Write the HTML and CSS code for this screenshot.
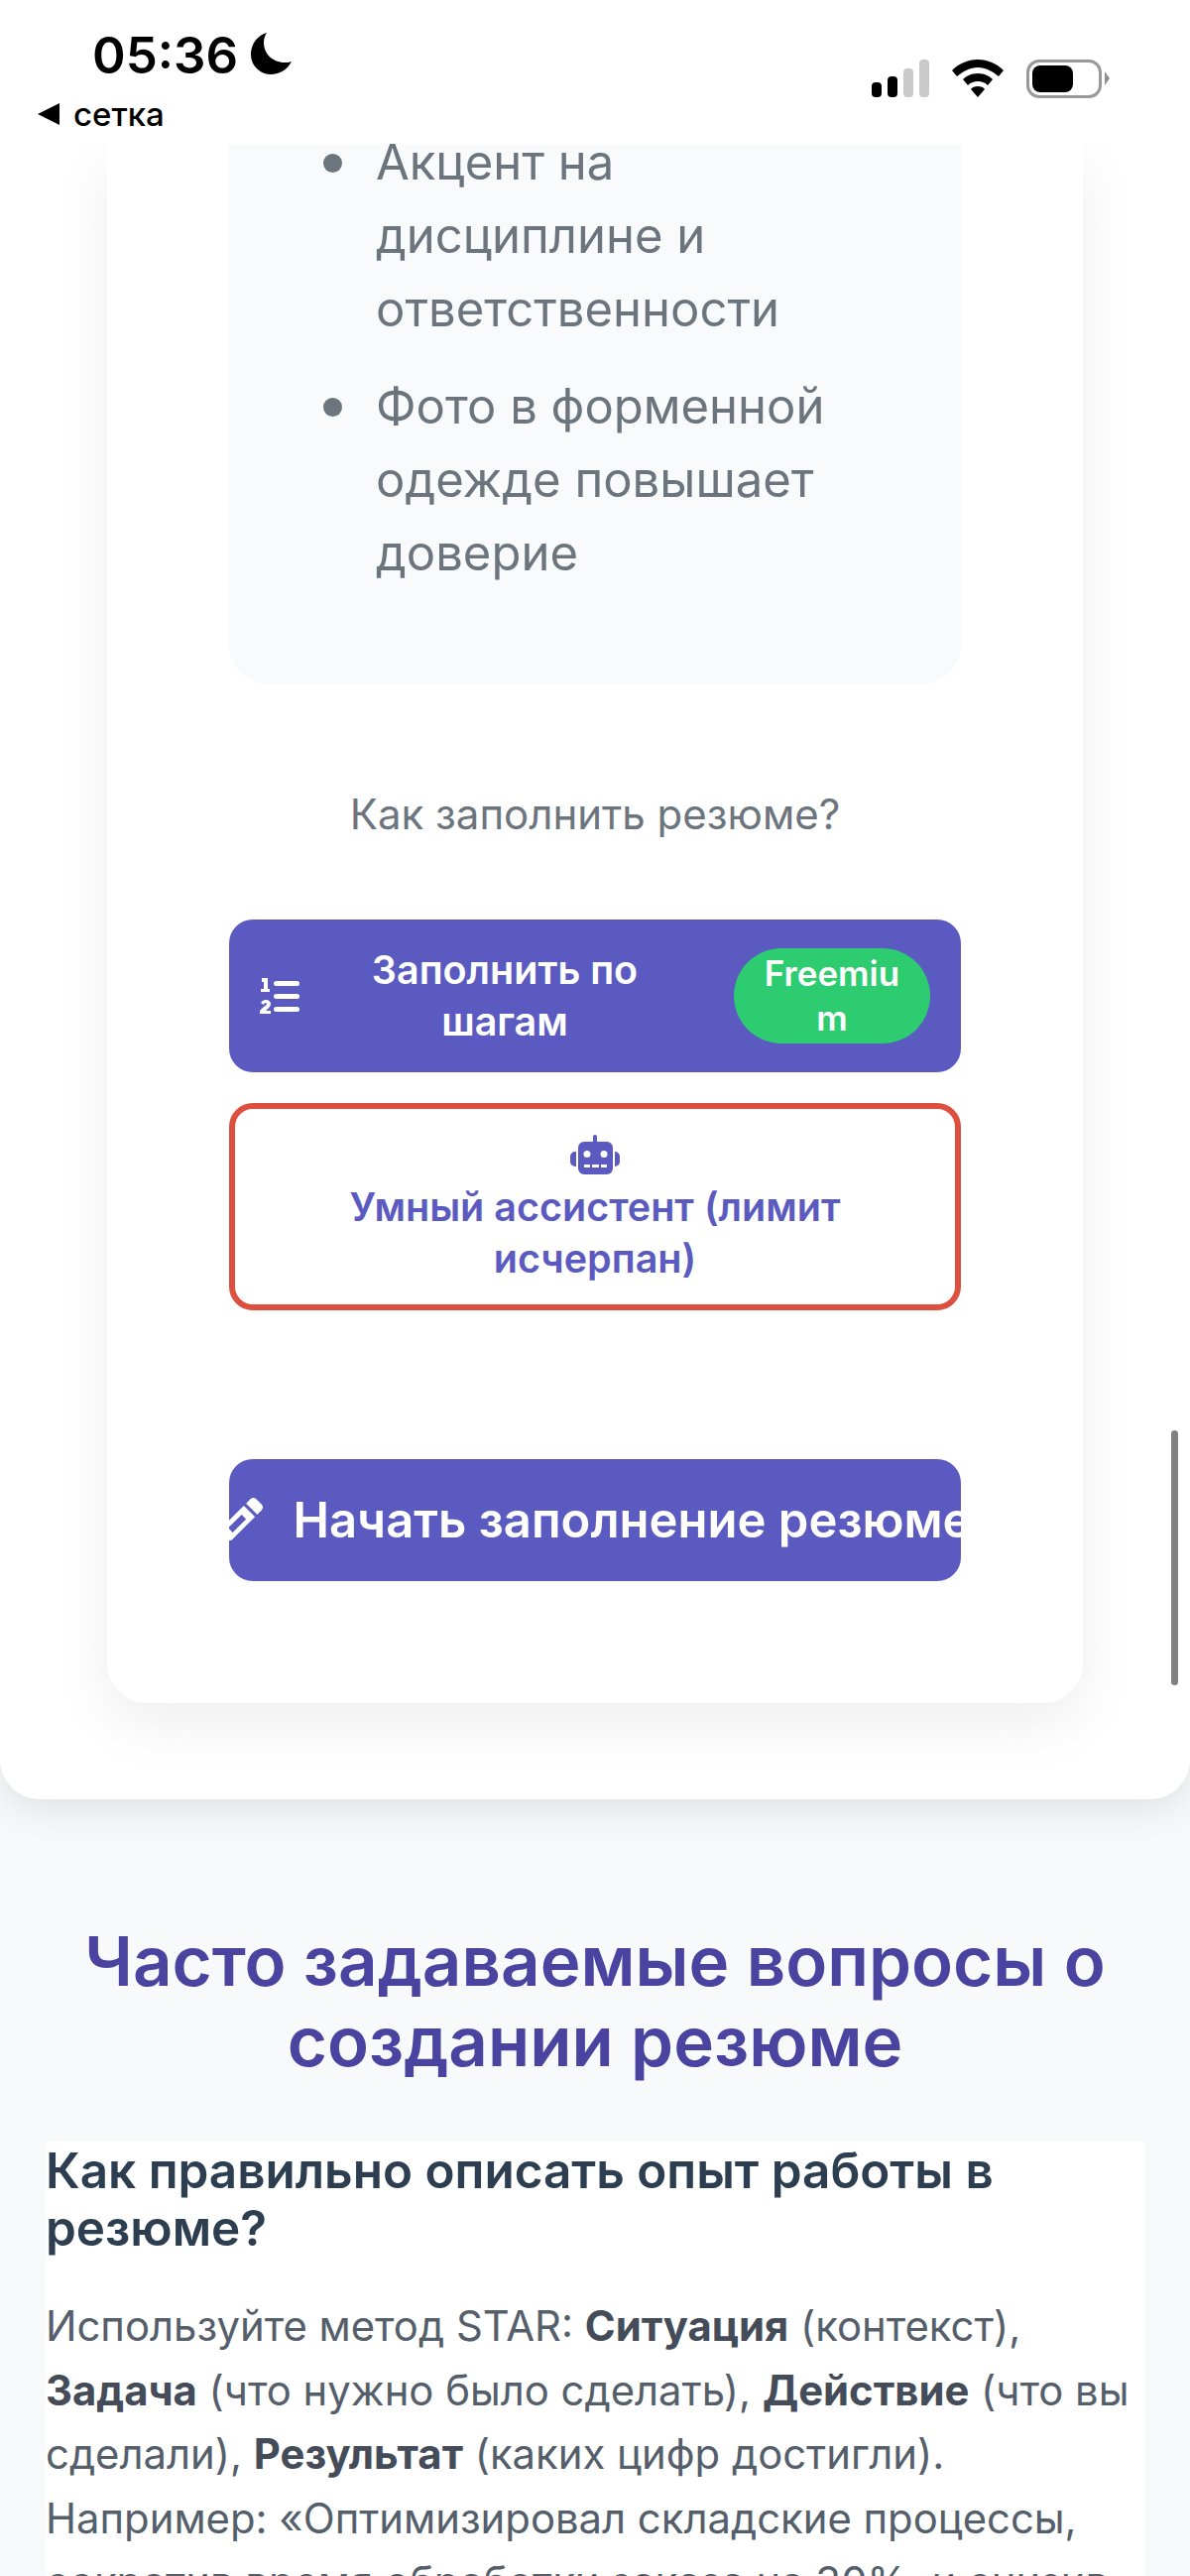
FILE: index.html
```html
<!DOCTYPE html>
<html lang="ru">
<head>
	<meta charset="utf-8">
	<title>Как заполнить резюме</title>
	<link rel="stylesheet" href="styles.css">
</head>
<body>
	<div class="statusBar">
		<div class="statusLeft">
			<div class="clockRow">
				<span class="clock">05:36</span>
				<svg class="moon" viewBox="0 0 44 44"><path d="M17 1C7 4 1 13 1 23c0 11 9 20 20 20 9 0 17-5 21-13-2 1-5 1-7 1C23 31 14 22 14 11c0-4 1-7 3-10z"/></svg>
			</div>
			<div class="backRow"><span class="backArrow"></span><span>сетка</span></div>
		</div>
		<div class="statusRight">
			<div class="signal">
				<span class="bar barOne"></span>
				<span class="bar barTwo"></span>
				<span class="bar barThree off"></span>
				<span class="bar barFour off"></span>
			</div>
			<svg class="wifi" viewBox="0 0 52 38"><path d="M26 0C16 0 7 4 0 11l5 6c6-5 13-9 21-9s15 4 21 9l5-6C45 4 36 0 26 0z"/><path d="M26 14c-7 0-12 3-15 6l5 6c3-3 6-4 10-4s7 1 10 4l5-6c-3-3-8-6-15-6z"/><path d="M26 27c-3 0-6 1-7 3l7 8 7-8c-1-2-4-3-7-3z"/></svg>
			<div class="battery">
				<div class="batteryBody"><span class="batteryLevel"></span></div>
				<span class="batteryCap"></span>
			</div>
		</div>
	</div>

	<div class="mainPanel">
		<div class="resumeCard">
			<div class="tipsBox">
				<ul class="tipsList">
					<li>Акцент на дисциплине и ответственности</li>
					<li>Фото в форменной одежде повышает доверие</li>
				</ul>
			</div>
			<p class="fillTitle">Как заполнить резюме?</p>
			<a class="fillBtn stepsBtn">
				<svg class="listIcon" viewBox="0 0 40 36">
					<rect x="14" y="3" width="26" height="5" rx="2.500"/>
					<rect x="14" y="16" width="26" height="5" rx="2.500"/>
					<rect x="14" y="29" width="26" height="5" rx="2.500"/>
					<path d="M2 0h6v11h2v3H1v-3h3V4H2z"/>
					<path d="M1 25c1-2 3-3 5-3 3 0 5 2 5 4 0 3-3 5-5 7h5v3H0v-2c1-4 7-6 7-8 0-1-1-1-1-1-1 0-2 1-2 2z"/>
				</svg>
				<span class="stepsText">Заполнить по шагам</span>
				<span class="badge">Freemium</span>
			</a>
			<a class="fillBtn assistBtn">
				<svg class="robotIcon" viewBox="0 0 50 40">
					<rect x="23" y="0" width="4" height="9" rx="2"/>
					<path d="M14 7h23a6 6 0 0 1 6 6v21a6 6 0 0 1-6 6H14a6 6 0 0 1-6-6V13a6 6 0 0 1 6-6zm3 9a3.500 3.500 0 1 0 0 7 3.500 3.500 0 0 0 0-7zm17 0a3.500 3.500 0 1 0 0 7 3.500 3.500 0 0 0 0-7zM14 30v3h6v-3zm8 0v3h7v-3zm9 0v3h6v-3z" fill-rule="evenodd"/>
					<path d="M6 17v15H5a5 5 0 0 1-5-5v-5a5 5 0 0 1 5-5zM45 17h0a5 5 0 0 1 5 5v5a5 5 0 0 1-5 5h0z"/>
				</svg>
				<span>Умный ассистент (лимит исчерпан)</span>
			</a>
			<a class="startBtn">
				<svg class="pencilIcon" viewBox="0 0 40 40"><path d="M29 1a4 4 0 0 1 5 0l5 5a4 4 0 0 1 0 5l-4 4-10-10z"/><path d="M23 7l10 10-21 21-12 2 2-12zM21 15L9 27l4 4 12-12z" fill-rule="evenodd"/></svg>
				<span>Начать заполнение резюме</span>
			</a>
		</div>
	</div>

	<div class="faqSection">
		<h2 class="faqTitle">Часто задаваемые вопросы о создании резюме</h2>
		<div class="faqItem">
			<h3>Как правильно описать опыт работы в резюме?</h3>
			<p>Используйте метод STAR: <b>Ситуация</b> (контекст), <b>Задача</b> (что нужно было сделать), <b>Действие</b> (что вы сделали), <b>Результат</b> (каких цифр достигли). Например: «Оптимизировал складские процессы, сократив время обработки заказа на 30%, и снизив издержки компании».</p>
		</div>
	</div>

	<div class="scrollThumb"></div>
</body>
</html>
```

FILE: styles.css
```css
html, body { margin: 0; padding: 0; height: 2597px; overflow: hidden; }
body { position: relative; font-family: Inter, "Noto Sans", sans-serif; background-color: #f8f9fa; color: #2c3e50; }

/* status bar */
.statusBar { display: flex; justify-content: space-between; height: 145px; background-color: #fff; color: #000; position: relative; z-index: 2; }
.statusLeft { padding: 26px 0 0 38px; }
.clockRow { display: flex; align-items: center; gap: 12px; padding-left: 55px; height: 60px; }
.clock { font-size: 51px; font-weight: 600; line-height: 60px; }
.moon { width: 44px; height: 44px; margin-top: -4px; }
.backRow { display: flex; align-items: center; gap: 14px; font-size: 33px; font-weight: 500; line-height: 40px; margin-top: 9px; }
.backArrow { border-right: 22px solid #000; border-top: 11px solid transparent; border-bottom: 11px solid transparent; }
.statusRight { display: flex; align-items: center; gap: 23px; padding: 54px 81px 0 0; height: 50px; }
.signal { display: flex; align-items: flex-end; gap: 6px; height: 38px; }
.bar { width: 10px; background-color: #000; border-radius: 4px; }
.off { background-color: #c9c9c9; }
.barOne { height: 15px; }
.barTwo { height: 21px; }
.barThree { height: 29px; }
.barFour { height: 38px; }
.wifi { width: 52px; height: 38px; }
.battery { display: flex; align-items: center; gap: 3px; }
.batteryBody { width: 76px; height: 39px; box-sizing: border-box; padding: 3px; border: 3px solid #999; border-radius: 13px; }
.batteryLevel { display: block; width: 41px; height: 27px; background-color: #000; border-radius: 8px; }
.batteryCap { border-left: 5px solid #8f8f8f; border-top: 7px solid transparent; border-bottom: 7px solid transparent; }

/* white panel with the card */
.mainPanel { background-color: #fff; border-radius: 0 0 40px 40px; padding: 0 108px 98px; box-shadow: 0 10px 40px rgba(0, 0, 0, 0.1); position: relative; z-index: 1; height: 1669px; box-sizing: border-box; }
.resumeCard { height: 1572px; box-sizing: border-box; padding: 0 123px; background-color: #fff; border-radius: 0 0 40px 40px; box-shadow: 0 20px 60px rgba(0, 0, 0, 0.07); }
.tipsBox { height: 545px; box-sizing: border-box; background-color: #f8fafb; border-radius: 0 0 40px 40px; overflow: hidden; }
.tipsList { list-style: none; margin: -18px 0 0; padding: 0 60px 0 148px; font-size: 49px; line-height: 74px; color: #6c757d; }
.tipsList li { position: relative; margin-bottom: 24px; }
.tipsList li::before { content: ""; position: absolute; left: -53px; top: 28px; width: 19px; height: 19px; border-radius: 50%; background-color: #6c757d; }
.fillTitle { margin: 101px 0 0; font-size: 42px; line-height: 60px; text-align: center; color: #6c757d; }

.fillBtn { display: flex; box-sizing: border-box; border-radius: 24px; text-align: center; font-weight: 600; font-size: 39.500px; line-height: 52px; }
.stepsBtn { align-items: center; height: 154px; margin-top: 76px; padding: 0 31px; background-color: #5b5ac0; color: #fff; }
.listIcon { width: 40px; height: 36px; flex: none; fill: #fff; }
.stepsText { flex: 1; padding: 0 36px 0 12px; }
.badge { flex: none; width: 198px; box-sizing: border-box; padding: 3px 24px; background-color: #2ecc71; border-radius: 50px; font-size: 35px; line-height: 45px; overflow-wrap: anywhere; }
.assistBtn { flex-direction: column; align-items: center; height: 209px; margin-top: 31px; padding: 26px 55px 0; border: 6px solid #dd4f3f; background-color: #fff; color: #5b5ac0; }
.robotIcon { width: 50px; height: 40px; flex: none; fill: #5b5ac0; margin-bottom: 7px; }

.startBtn { display: flex; align-items: center; justify-content: center; gap: 30px; height: 123px; margin-top: 150px; overflow: hidden; border-radius: 24px; background-color: #5b5ac0; color: #fff; font-size: 49px; font-weight: 600; white-space: nowrap; }
.pencilIcon { width: 45px; height: 45px; flex: none; fill: #fff; }

/* faq */
.faqSection { padding: 123px 46px 0; }
.faqTitle { margin: 0 0 60px; font-size: 69px; line-height: 81px; font-weight: 600; text-align: center; color: #4a44a0; }
.faqItem { background-color: #fff; }
.faqItem h3 { margin: 0; padding-bottom: 38px; font-size: 49.400px; line-height: 58px; font-weight: 600; color: #2c3e50; }
.faqItem p { margin: 0; font-size: 41.800px; line-height: 64.500px; color: #555f6b; }
.faqItem b { font-weight: 700; color: #434c58; }

.scrollThumb { position: absolute; top: 1442px; left: 1181px; width: 7px; height: 257px; border-radius: 4px; background-color: #808080; z-index: 3; }
```
